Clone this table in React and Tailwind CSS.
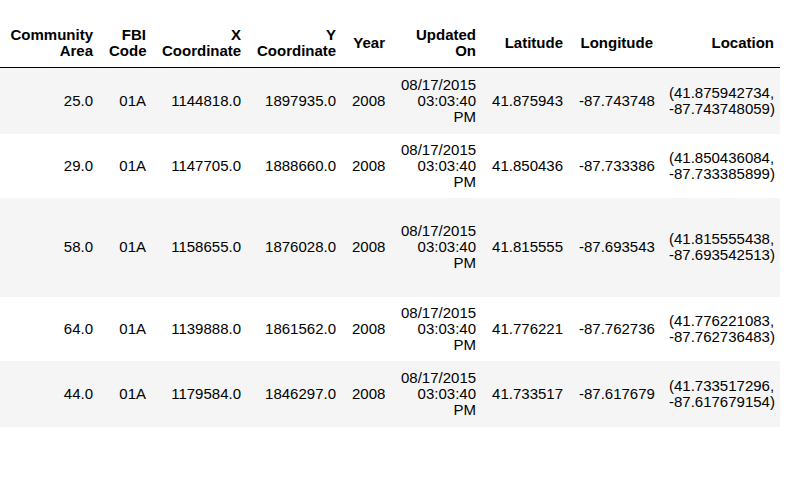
import React from "react";

const cols = [
  { label: ["Community", "Area"], w: "w-[101px]" },
  { label: ["FBI", "Code"], w: "w-[53px]" },
  { label: ["X", "Coordinate"], w: "w-[95px]" },
  { label: ["Y", "Coordinate"], w: "w-[95px]" },
  { label: ["Year"], w: "w-[49px]" },
  { label: ["Updated", "On"], w: "w-[91px]" },
  { label: ["Latitude"], w: "w-[87px]" },
  { label: ["Longitude"], w: "w-[90px]" },
  { label: ["Location"], w: "w-[119px]" },
];

const rows = [
  { h: "h-[66px]", bg: "bg-[#f5f5f5]", v: ["25.0", "01A", "1144818.0", "1897935.0", "2008", "41.875943", "-87.743748", "(41.875942734,", "-87.743748059)"] },
  { h: "h-[64px]", bg: "bg-white", v: ["29.0", "01A", "1147705.0", "1888660.0", "2008", "41.850436", "-87.733386", "(41.850436084,", "-87.733385899)"] },
  { h: "h-[99px]", bg: "bg-[#f5f5f5]", v: ["58.0", "01A", "1158655.0", "1876028.0", "2008", "41.815555", "-87.693543", "(41.815555438,", "-87.693542513)"] },
  { h: "h-[64px]", bg: "bg-white", v: ["64.0", "01A", "1139888.0", "1861562.0", "2008", "41.776221", "-87.762736", "(41.776221083,", "-87.762736483)"] },
  { h: "h-[66px]", bg: "bg-[#f5f5f5]", v: ["44.0", "01A", "1179584.0", "1846297.0", "2008", "41.733517", "-87.617679", "(41.733517296,", "-87.617679154)"] },
];

export default function App() {
  return (
    <div className="w-[787px] h-[483px] bg-white pt-[19px] font-['Liberation_Sans',Arial,sans-serif] text-[15px] leading-[16px] text-black">
      <table className="table-fixed border-collapse w-[780px]">
        <thead>
          <tr className="border-b border-black">
            {cols.map((c, i) => (
              <th key={i} className={`${c.w} text-right align-middle font-bold px-2 py-2 last:pr-[6px]`}>
                {c.label.map((l, j) => (
                  <div key={j}>{l}</div>
                ))}
              </th>
            ))}
          </tr>
        </thead>
        <tbody>
          {rows.map((r, i) => (
            <tr key={i} className={`${r.h} ${r.bg}`}>
              {r.v.slice(0, 5).map((x, j) => (
                <td key={j} className="text-right align-middle px-2">{x}</td>
              ))}
              <td className="text-right align-middle px-2">
                <div>08/17/2015</div>
                <div>03:03:40</div>
                <div>PM</div>
              </td>
              <td className="text-right align-middle px-2">{r.v[5]}</td>
              <td className="text-right align-middle px-2">{r.v[6]}</td>
              <td className="text-right align-middle pl-2 pr-[6px]">
                <div>{r.v[7]}</div>
                <div>{r.v[8]}</div>
              </td>
            </tr>
          ))}
        </tbody>
      </table>
    </div>
  );
}
